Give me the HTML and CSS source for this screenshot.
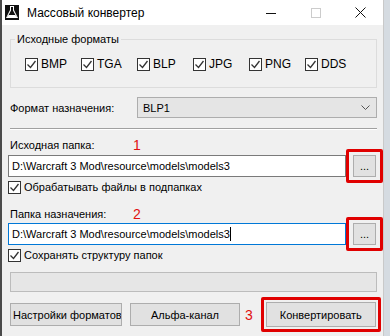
FILE: index.html
```html
<!DOCTYPE html>
<html lang="ru">
<head>
    <meta charset="UTF-8">
    <title>Массовый конвертер</title>
    <link rel="stylesheet" href="styles.css">
</head>
<body>
    <div class="window">
        <div class="titlebar">
            <svg class="app-icon" width="14" height="15" viewBox="0 0 14 15">
                <rect x="0" y="0" width="14" height="15" fill="#111"/>
                <path d="M5 1 H9 V5 L13 13 H1 L5 5 Z" fill="#fff"/>
                <path d="M6 2 H8 V5.5 L11.5 12 H2.5 L6 5.5 Z" fill="#111"/>
                <path d="M3.5 10 H10.5 L11.5 12 H2.5 Z" fill="#fff"/>
            </svg>
            <span class="title">Массовый конвертер</span>
            <div class="controls">
                <span class="ctl"><svg width="10" height="10" viewBox="0 0 10 10"><path d="M0 5.5 H10" stroke="#111" stroke-width="1"/></svg></span>
                <span class="ctl"><svg width="10" height="10" viewBox="0 0 10 10"><rect x="0.5" y="0.5" width="9" height="9" fill="none" stroke="#ccc" stroke-width="1"/></svg></span>
                <span class="ctl"><svg width="11" height="11" viewBox="0 0 11 11"><path d="M0.5 0.5 L10.5 10.5 M10.5 0.5 L0.5 10.5" stroke="#111" stroke-width="1"/></svg></span>
            </div>
        </div>

        <div class="client">
            <fieldset class="group">
                <legend>Исходные форматы</legend>
                <div class="formats">
                    <label class="check fmt"><span class="box"><svg width="11" height="11" viewBox="0 0 11 11"><path d="M1.5 5.5 L4.5 8.5 L9.5 2" fill="none" stroke="#333" stroke-width="1.3"/></svg></span>BMP</label>
                    <label class="check fmt"><span class="box"><svg width="11" height="11" viewBox="0 0 11 11"><path d="M1.5 5.5 L4.5 8.5 L9.5 2" fill="none" stroke="#333" stroke-width="1.3"/></svg></span>TGA</label>
                    <label class="check fmt"><span class="box"><svg width="11" height="11" viewBox="0 0 11 11"><path d="M1.5 5.5 L4.5 8.5 L9.5 2" fill="none" stroke="#333" stroke-width="1.3"/></svg></span>BLP</label>
                    <label class="check fmt"><span class="box"><svg width="11" height="11" viewBox="0 0 11 11"><path d="M1.5 5.5 L4.5 8.5 L9.5 2" fill="none" stroke="#333" stroke-width="1.3"/></svg></span>JPG</label>
                    <label class="check fmt"><span class="box"><svg width="11" height="11" viewBox="0 0 11 11"><path d="M1.5 5.5 L4.5 8.5 L9.5 2" fill="none" stroke="#333" stroke-width="1.3"/></svg></span>PNG</label>
                    <label class="check fmt"><span class="box"><svg width="11" height="11" viewBox="0 0 11 11"><path d="M1.5 5.5 L4.5 8.5 L9.5 2" fill="none" stroke="#333" stroke-width="1.3"/></svg></span>DDS</label>
                </div>
            </fieldset>

            <div class="target-row">
                <span class="label">Формат назначения:</span>
                <div class="combo">
                    <span>BLP1</span>
                    <svg width="9" height="5" viewBox="0 0 9 5"><path d="M0.5 0.5 L4.5 4.5 L8.5 0.5" fill="none" stroke="#555" stroke-width="1"/></svg>
                </div>
            </div>

            <div class="sep"></div>

            <div class="caption"><span class="cap-text">Исходная папка:</span><span class="mark">1</span></div>
            <div class="path-row">
                <div class="field">D:\Warcraft 3 Mod\resource\models\models3</div>
                <div class="hl"><button class="browse">...</button></div>
            </div>
            <label class="check opt"><span class="box"><svg width="11" height="11" viewBox="0 0 11 11"><path d="M1.5 5.5 L4.5 8.5 L9.5 2" fill="none" stroke="#333" stroke-width="1.3"/></svg></span>Обрабатывать файлы в подпапках</label>

            <div class="caption second"><span class="cap-text">Папка назначения:</span><span class="mark">2</span></div>
            <div class="path-row">
                <div class="field focused">D:\Warcraft 3 Mod\resource\models\models3<span class="caret"></span></div>
                <div class="hl"><button class="browse">...</button></div>
            </div>
            <label class="check opt"><span class="box"><svg width="11" height="11" viewBox="0 0 11 11"><path d="M1.5 5.5 L4.5 8.5 L9.5 2" fill="none" stroke="#333" stroke-width="1.3"/></svg></span>Сохранять структуру папок</label>

            <div class="progress"></div>

            <div class="actions">
                <button class="btn settings">Настройки форматов</button>
                <button class="btn alpha">Альфа-канал</button>
                <span class="mark three">3</span>
                <div class="hl big"><button class="btn convert">Конвертировать</button></div>
            </div>
        </div>
    </div>
</body>
</html>
```

FILE: styles.css
```css
* {
    box-sizing: border-box;
}

body {
    margin: 0;
    height: 336px;
    overflow: hidden;
    background-color: #d5dbe1;
    font-family: "Liberation Sans", Arial, sans-serif;
    font-size: 11px;
    color: #000;
}

.window {
    width: 384px;
    height: 336px;
    border-left: 2px solid #4b4b4b;
    border-right: 1px solid #c9c9c9;
    background-color: #f0f0f0;
}

.titlebar {
    display: flex;
    align-items: center;
    height: 25px;
    background-color: #fff;
}

.app-icon {
    margin-left: 3px;
}

.title {
    margin-left: 8px;
    font-size: 12px;
}

.controls {
    display: flex;
    margin-left: auto;
}

.ctl {
    display: flex;
    justify-content: center;
    align-items: center;
    width: 45px;
    height: 25px;
}

.client {
    padding: 7px 0 0 6px;
}

.group {
    margin: 0 0 0 2px;
    width: 367px;
    height: 56px;
    padding: 0 0 0 4px;
    border: 1px solid #dcdcdc;
}

.group legend {
    padding: 0 2px;
    line-height: 14px;
}

.formats {
    display: flex;
    padding: 11px 0 0 10px;
    font-size: 12px;
}

.check {
    display: flex;
    align-items: center;
    height: 14px;
}

.fmt {
    width: 56px;
}

.box {
    display: flex;
    justify-content: center;
    align-items: center;
    width: 13px;
    height: 13px;
    margin-right: 3px;
    border: 1px solid #333;
    background-color: #fff;
}

.target-row {
    display: flex;
    align-items: center;
    margin: 9px 0 0 2px;
}

.label {
    width: 127px;
}

.combo {
    display: flex;
    align-items: center;
    justify-content: space-between;
    width: 240px;
    height: 21px;
    padding: 0 6px 0 5px;
    border: 1px solid #adadad;
    background-color: #e5e5e5;
}

.sep {
    width: 367px;
    margin: 10px 0 0 2px;
    border-top: 1px solid #a0a0a0;
    border-bottom: 1px solid #fff;
}

.caption {
    display: flex;
    align-items: center;
    height: 14px;
    margin: 8px 0 0 2px;
}

.caption.second {
    margin-top: 13px;
}

.cap-text {
    width: 123px;
}

.mark {
    color: #e01010;
    font-size: 14px;
}

.path-row {
    display: flex;
    align-items: center;
    margin-top: -3px;
}

.caption.second + .path-row {
    margin-top: -4px;
}

.field {
    display: flex;
    align-items: center;
    width: 338px;
    height: 22px;
    padding-left: 3px;
    border: 1px solid #7a7a7a;
    background-color: #fff;
    white-space: nowrap;
}

.field.focused {
    border-color: #0078d7;
}

.caret {
    width: 1px;
    height: 14px;
    background-color: #000;
}

.hl {
    display: flex;
    justify-content: center;
    align-items: center;
    width: 37px;
    height: 34px;
    border: 3px solid #e00000;
    border-radius: 2px;
}

.browse {
    width: 23px;
    height: 22px;
    padding: 0;
    border: 1px solid #adadad;
    background-color: #e1e1e1;
    font-family: "Liberation Sans", Arial, sans-serif;
    font-size: 11px;
    line-height: 12px;
}

.opt {
    margin-top: -3px;
}

.progress {
    width: 367px;
    height: 20px;
    margin: 10px 0 0 2px;
    border: 1px solid #bcbcbc;
    background-color: #e6e6e6;
}

.actions {
    display: flex;
    align-items: center;
    margin: 5px 0 0 2px;
}

.btn {
    height: 23px;
    padding: 0;
    border: 1px solid #adadad;
    background-color: #e1e1e1;
    font-family: "Liberation Sans", Arial, sans-serif;
    font-size: 11px;
    white-space: nowrap;
    overflow: hidden;
}

.settings {
    width: 112px;
    text-align: left;
    padding-left: 2px;
}

.alpha {
    width: 110px;
    margin-left: 8px;
}

.three {
    margin-left: 5px;
}

.hl.big {
    width: 120px;
    height: 35px;
    margin-left: 8px;
}

.convert {
    width: 110px;
    height: 25px;
}
```
